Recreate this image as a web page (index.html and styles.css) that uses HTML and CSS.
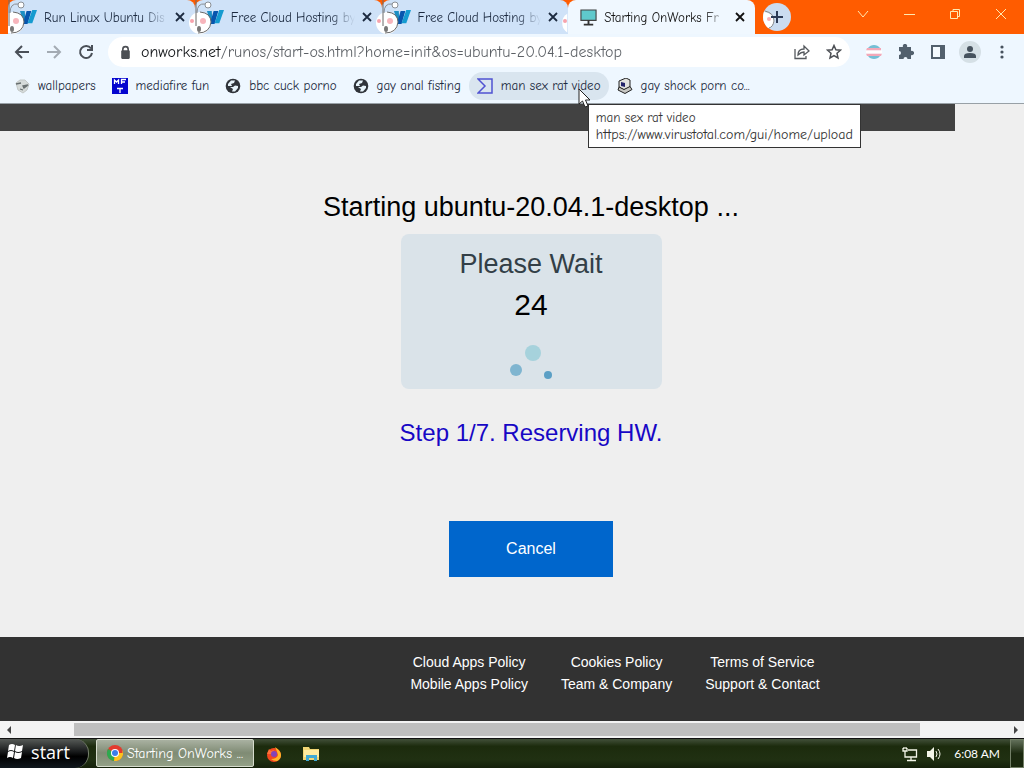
FILE: index.html
```html
<!DOCTYPE html>
<html lang="en">
<head>
<meta charset="utf-8">
<meta name="viewport" content="width=device-width, initial-scale=1">
<title>Starting OnWorks</title>
<link rel="stylesheet" href="styles.css">
</head>
<body>
<svg class="defs" aria-hidden="true">
  <symbol id="works" viewBox="0 0 18 16"><path d="M0 1h5l1 14H4z" fill="#1c8fc4"/><path d="M7 1h5l-4 14H3z" fill="#0756ae"/><path d="M13 0h5l-5 14H8z" fill="#159bd0"/></symbol>
  <symbol id="face" viewBox="0 0 26 34"><ellipse cx="11" cy="23" rx="11" ry="11" fill="#fff"/><path d="M8 13Q8 3 16 4" fill="none" stroke="#8a8f95"/><circle cx="19" cy="5" r="3" fill="#fff" stroke="#8a8f95"/><path d="M11 12Q22 13 22 22Q21 33 9 33M7 0v26" fill="none" stroke="#6a6a6a"/><circle cx="3" cy="21" r="2" fill="#f7a3ad"/><circle cx="14" cy="21" r="3" fill="#f7b5bc"/><ellipse cx="10" cy="29" rx="2" ry="3" fill="#777"/></symbol>
  <symbol id="cross" viewBox="0 0 10 10"><path d="M1 1l8 8M9 1L1 9" fill="none" stroke="currentColor" stroke-width="1.800"/></symbol>
  <symbol id="globe" viewBox="0 0 16 16"><circle cx="8" cy="8" r="7.300" fill="#30343a"/><path d="M3 6l3-3.500h4L9 5 6 6l1 2H3zM8 9l2-1.500 3 .5v2l-3 3.500H7l1-2.500-3-2z" fill="#e8f4fb"/></symbol>
</svg>

<header class="browser">
  <div class="tabstrip">
    <div class="tabs">
      <div class="tab"><svg class="fav"><use href="#works"/></svg><svg class="face"><use href="#face"/></svg><span class="tab-title">Run Linux Ubuntu Dis</span><button class="close" aria-label="Close tab"><svg><use href="#cross"/></svg></button></div>
      <div class="tab"><svg class="fav"><use href="#works"/></svg><svg class="face"><use href="#face"/></svg><span class="tab-title">Free Cloud Hosting by</span><button class="close" aria-label="Close tab"><svg><use href="#cross"/></svg></button></div>
      <div class="tab"><svg class="fav"><use href="#works"/></svg><svg class="face"><use href="#face"/></svg><span class="tab-title">Free Cloud Hosting by</span><button class="close" aria-label="Close tab"><svg><use href="#cross"/></svg></button></div>
      <div class="tab active"><svg class="fav" viewBox="0 0 18 18"><path d="M1 1h16v11H1z" fill="#5fc9cc" stroke="#444" stroke-width="1.200"/><path d="M9 12v4M4 16.500h10" stroke="#333" stroke-width="2"/></svg><svg class="face"><use href="#face"/></svg><span class="tab-title">Starting OnWorks Fr</span><button class="close" aria-label="Close tab"><svg><use href="#cross"/></svg></button></div>
    </div>
    <button class="newtab" aria-label="New tab"><svg viewBox="0 0 28 28"><circle cx="14" cy="14" r="14" fill="#cbdcf0"/><path d="M1 9Q10 10 11 18Q9 25 5 25Q-2 18 1 9z" fill="#fff"/><path d="M2 8Q11 10 11 18Q10 24 6 25" fill="none" stroke="#888"/><circle cx="6" cy="16" r="2" fill="#f7b0b8"/><path d="M14 8v12M8 14h12" stroke="#2c3a55" stroke-width="2"/></svg></button>
    <div class="window-buttons">
      <button aria-label="Search tabs"><svg viewBox="0 0 12 12"><path d="M1 3l5 6 5-6"/></svg></button>
      <button aria-label="Minimize"><svg viewBox="0 0 12 12"><path d="M1 6.500h11"/></svg></button>
      <button aria-label="Restore"><svg viewBox="0 0 12 12"><path d="M1.500 3.500h7v7h-7zM4 3.500v-2h6.500v7h-2"/></svg></button>
      <button aria-label="Close window"><svg viewBox="0 0 12 12"><path d="M1 1l10 10M11 1L1 11"/></svg></button>
    </div>
  </div>

  <div class="toolbar">
    <div class="nav">
      <button aria-label="Back"><svg viewBox="0 0 16 16"><path d="M15 8H2M8 2L2 8l6 6"/></svg></button>
      <button class="faint" aria-label="Forward"><svg viewBox="0 0 16 16"><path d="M1 8h13M8 2l6 6-6 6"/></svg></button>
      <button aria-label="Reload"><svg viewBox="0 0 16 16"><path d="M13 4.500A6 6 0 1 0 14 9M14 1v5H9"/></svg></button>
    </div>
    <div class="omnibox">
      <svg class="lock" viewBox="0 0 10 14"><path d="M2.500 6V4a2.500 2.500 0 0 1 5 0v2" fill="none" stroke="#4c4f54" stroke-width="1.500"/><rect x="1" y="5" width="8" height="8" rx="1" fill="#4c4f54"/></svg>
      <input class="url" type="text" aria-label="Address" value="onworks.net/runos/start-os.html?home=init&amp;os=ubuntu-20.04.1-desktop">
      <button aria-label="Share"><svg viewBox="0 0 16 16" fill="none" stroke="#55595e" stroke-width="1.300"><path d="M1 5v9.500h11V12M4 11c0-4 2-6 6-6V2l5 5-5 4V8c-3 0-4 1-6 3z"/></svg></button>
      <button aria-label="Bookmark"><svg viewBox="0 0 16 16" fill="none" stroke="#4c4f54" stroke-width="1.500"><path d="M8 1.500l1.900 4.300 4.600.4-3.500 3.100 1 4.600L8 11.500l-4 2.400 1-4.600-3.500-3.100 4.600-.4z"/></svg></button>
    </div>
    <div class="extensions">
      <button aria-label="Flag extension"><svg viewBox="0 0 16 16"><path d="M2 4a7.500 7.500 0 0 1 12 0z" fill="#75bfd5"/><path d="M1 4h14v2.500H0zM0 9.500h16L15 12H1z" fill="#f3a8b8"/><path d="M0 6.500h16v3H0z" fill="#fff"/><path d="M2 12a7.500 7.500 0 0 0 12 0z" fill="#75bfd5"/></svg></button>
      <button aria-label="Extensions"><svg viewBox="0 0 16 16" fill="#52606d"><path d="M1 3h4a2.200 2.200 0 1 1 4 0h4v4a2.200 2.200 0 1 1 0 4v4H9.500a2 2 0 1 0-4 0H1v-4a2 2 0 1 0 0-4z"/></svg></button>
      <button aria-label="Side panel"><svg viewBox="0 0 16 16"><path d="M2 2h12v12H2z" fill="#f5fbff" stroke="#52606d" stroke-width="2"/><path d="M10 2h4v12h-4z" fill="#52606d"/></svg></button>
      <button class="profile" aria-label="Profile"><svg viewBox="0 0 22 22"><circle cx="11" cy="11" r="11" fill="#d5e0e6"/><circle cx="11" cy="8" r="3" fill="#46525e"/><path d="M5 17v-2q0-3 6-3t6 3v2z" fill="#46525e"/></svg></button>
      <button aria-label="Menu"><svg viewBox="0 0 16 16" fill="#46525e"><circle cx="8" cy="3" r="1.600"/><circle cx="8" cy="8" r="1.600"/><circle cx="8" cy="13" r="1.600"/></svg></button>
    </div>
  </div>

  <nav class="bookmarks" aria-label="Bookmarks">
    <a href="#"><svg viewBox="0 0 16 16"><path d="M2 5l4-3 5 0 4 4-2 6-4 3-5-3z" fill="#d5dad9" stroke="#c3c8c7"/><path d="M2 6l5-1M9 8l5-1-4 3zM6 11l3 1" fill="none" stroke="#686f70" stroke-width="1.300"/></svg>wallpapers</a>
    <a href="#"><svg viewBox="0 0 16 16"><path d="M0 0h16v16H0z" fill="#0505cf"/><path d="M2.500 6V2l2 2 2-2v4M9.500 6V1.500H14M9.500 4H13M5 10.500h6M8 10v5" fill="none" stroke="#fff" stroke-width="1.300"/></svg>mediafire fun</a>
    <a href="#"><svg><use href="#globe"/></svg>bbc cuck porno</a>
    <a href="#"><svg><use href="#globe"/></svg>gay anal fisting</a>
    <a href="#" class="hover"><svg viewBox="0 0 16 16"><path d="M1 1h14v14H1l7-7z" fill="none" stroke="#5053d2" stroke-width="1.500"/></svg>man sex rat video
      <span class="tooltip" role="tooltip">man sex rat video<span class="tooltip-url">https://www.virustotal.com/gui/home/upload</span></span>
      <svg class="cursor" viewBox="0 0 13 20"><path d="M1 1v15l3.500-3 2.500 6 3-1-2.500-6H12z" fill="#fff" stroke="#222"/></svg>
    </a>
    <a href="#"><svg viewBox="0 0 16 16"><path d="M2 3l7-3 4 2v7l-6 3-5-3z" fill="#e2e2df" stroke="#222"/><path d="M4 4l4 1v4L4 8z" fill="#23236b"/><path d="M2 9l-1 3 7 3.500 7-4-2-3-6 3z" fill="#c6c6c2" stroke="#222"/></svg>gay shock porn co...</a>
  </nav>
</header>

<main class="page">
  <div class="topbar"></div>
  <section class="launch">
    <h1>Starting ubuntu-20.04.1-desktop ...</h1>
    <div class="wait">
      <p class="wait-title">Please Wait</p>
      <p class="count">24</p>
      <svg class="spinner" viewBox="0 0 44 36"><circle cx="24" cy="9" r="8" fill="#a6d2dc"/><circle cx="7" cy="26" r="6" fill="#7fb5d0"/><circle cx="39" cy="31" r="4" fill="#5b9fc5"/></svg>
    </div>
    <p class="step">Step 1/7. Reserving HW.</p>
    <button class="cancel">Cancel</button>
  </section>
  <footer class="footer">
    <div><a href="#">Cloud Apps Policy</a><a href="#">Mobile Apps Policy</a></div>
    <div><a href="#">Cookies Policy</a><a href="#">Team &amp; Company</a></div>
    <div><a href="#">Terms of Service</a><a href="#">Support &amp; Contact</a></div>
  </footer>
</main>

<div class="scrollbar">
  <button aria-label="Scroll left"><svg viewBox="0 0 6 8"><path d="M5 0v8L1 4z"/></svg></button>
  <div class="track"><div class="thumb"></div></div>
  <button aria-label="Scroll right"><svg viewBox="0 0 6 8"><path d="M1 0v8l4-4z"/></svg></button>
</div>

<div class="taskbar">
  <button class="start"><svg viewBox="0 0 18 18" fill="#fff"><path d="M3 2q3-2 6 0L8 8Q5 6 2 8zM10 2q3 2 7 0l-1 6q-4 2-7 0zM2 9q3-2 6 0l-1 6q-3-2-6 0zM9 9q3 2 7 0l-1 6q-4 2-7 0z"/></svg>start</button>
  <button class="task"><svg viewBox="0 0 16 16"><circle cx="8" cy="8" r="8" fill="#e33b2e"/><path d="M8 8L1 4a8 8 0 0 0 6 12z" fill="#2da94f"/><path d="M8 8h7.500v-3A8 8 0 0 1 7 16z" fill="#fcc31e"/><circle cx="8" cy="8" r="4" fill="#fff"/><circle cx="8" cy="8" r="3" fill="#3b7de9"/></svg><span>Starting OnWorks ...</span></button>
  <button class="launcher" aria-label="Firefox"><svg viewBox="0 0 16 16"><circle cx="8" cy="9" r="7" fill="#f4491f"/><path d="M1 8l2-5 2 2 3-1-2 4z" fill="#ff7139"/><path d="M9 1q6 4 6 8 0 4-4 6-4 0-6-2 6 0 7-4-1-4-3-8z" fill="#ffb528"/><circle cx="8" cy="8" r="3" fill="#8444b9"/></svg></button>
  <button class="launcher" aria-label="File Explorer"><svg viewBox="0 0 16 16"><path d="M0 1h6l1 2h9v11H0z" fill="#f2d675"/><path d="M1 4h15v7H1z" fill="#ffeba0"/><path d="M3 9h11v6h-3v-3H6v3H3z" fill="#40a9d4"/></svg></button>
  <div class="tray">
    <svg viewBox="0 0 16 16" fill="none" stroke="#f3f5e8" stroke-width="1.300"><path d="M6 4h8.500v7H5M9 11v3M5 14.500h9M1 2v3h4V2M3 5v6h3M2 1v2M4 1v2"/></svg>
    <svg viewBox="0 0 16 16"><path d="M1 5h3l4-4v14l-4-4H1z" fill="#f3f5e8"/><path d="M10 5q2 3 0 6M12 3q4 5 0 10" fill="none" stroke="#f3f5e8"/></svg>
    <time>6:08 AM</time>
    <button class="desktop" aria-label="Show desktop"></button>
  </div>
</div>
</body>
</html>
```
FILE: styles.css
```css
* { box-sizing: border-box; }
body {
  margin: 0;
  min-height: 100vh;
  display: flex;
  flex-direction: column;
  background: #efefef;
  font-family: "Liberation Sans", Arial, sans-serif;
  overflow-x: hidden;
}
h1, p { margin: 0; font-weight: 400; }
a { color: inherit; text-decoration: none; }
button { border: 0; padding: 0; background: none; font: inherit; color: inherit; display: flex; align-items: center; justify-content: center; }
svg { display: block; flex: none; width: 16px; height: 16px; }
.defs { position: absolute; width: 0; height: 0; }

.browser {
  font-family: "Comic Sans MS", "Comic Neue", "Noto Sans", sans-serif;
  font-size: 13px;
  color: #1c2a40;
  background: #eef7ff;
  border-bottom: 1px solid #98a0a6;
}
.tabstrip { display: flex; align-items: stretch; height: 34px; padding-left: 8px; background: #ff5c00; }
.tabs { display: flex; flex: 0 1 747px; min-width: 0; }
.tab {
  position: relative;
  flex: 1 1 0;
  min-width: 0;
  display: flex;
  align-items: center;
  gap: 7px;
  padding: 0 10px 0 12px;
  background: #cfe2f8;
  border-radius: 8px 8px 0 0;
}
.tab.active { background: #f0f8ff; color: #111; }
.tab .face { position: absolute; left: -6px; top: 0; width: 26px; height: 34px; }
.tab:first-child .face { clip-path: inset(0 0 0 6px); }
.tab.active .face { clip-path: inset(0 21px 0 0); }
.tab .fav { width: 17px; height: 17px; }
.tab-title {
  flex: 1;
  min-width: 0;
  overflow: hidden;
  white-space: nowrap;
  -webkit-mask-image: linear-gradient(to right, #000 80%, transparent);
  mask-image: linear-gradient(to right, #000 80%, transparent);
}
.close svg { width: 10px; height: 10px; }
.newtab { margin-left: 8px; }
.newtab svg { width: 28px; height: 28px; }
.window-buttons { display: flex; margin-left: auto; padding-bottom: 6px; }
.window-buttons button { width: 46px; }
.window-buttons svg { width: 12px; height: 12px; fill: none; stroke: #ffe9b0; stroke-width: 1; }

.toolbar { display: flex; align-items: center; height: 36px; }
.nav { display: flex; gap: 16px; padding: 0 14px; }
.nav svg { fill: none; stroke: #4a5058; stroke-width: 2; }
.nav .faint { opacity: .45; }
.omnibox { flex: 1; min-width: 0; display: flex; align-items: center; gap: 16px; height: 30px; padding: 0 8px 0 12px; background: #fff; border-radius: 15px; }
.lock { width: 11px; height: 15px; }
.url {
  flex: 1;
  min-width: 0;
  border: 0;
  padding: 0;
  margin-left: -6px;
  font: inherit;
  font-size: 16px;
  color: transparent;
  background: linear-gradient(to right, #111417 80px, #5c6065 80px);
  -webkit-background-clip: text;
  background-clip: text;
}
.extensions { display: flex; align-items: center; gap: 16px; padding: 0 14px 0 16px; }
.profile { margin: 0 -3px; }
.profile svg { width: 22px; height: 22px; }

.bookmarks { display: flex; align-items: center; height: 33px; padding: 0 6px 2px; white-space: nowrap; }
.bookmarks a { position: relative; display: flex; align-items: center; gap: 8px; height: 28px; padding: 0 8px; border-radius: 14px; }
.bookmarks .hover { background: #d9e5ef; }
.bookmarks .cursor { position: absolute; left: 109px; top: 16px; width: 13px; height: 20px; z-index: 3; }
.tooltip {
  position: absolute;
  left: 119px;
  top: 32px;
  z-index: 2;
  padding: 4px 7px;
  line-height: 17px;
  color: #333;
  background: #fff;
  border: 1px solid #333;
}
.tooltip-url { display: block; font-size: 14px; }

.page { flex: 1; display: flex; flex-direction: column; }
.topbar { height: 27px; margin-right: 69px; background: #424242; }
.launch { flex: 1; display: flex; flex-direction: column; align-items: center; padding: 60px 0 60px 38px; }
.launch h1 { font-size: 27px; line-height: 32px; color: #000; }
.wait { width: 261px; height: 155px; margin-top: 11px; padding-top: 14px; border-radius: 8px; background: #dae3e9; text-align: center; }
.wait-title { font-size: 27px; line-height: 32px; color: #333f47; }
.count { margin-top: 8px; font-size: 30px; line-height: 34px; color: #000; }
.spinner { width: 44px; height: 36px; margin: 22px auto 0; }
.step { margin-top: 30px; font-size: 24px; line-height: 28px; color: #1707c5; }
.cancel { width: 164px; height: 56px; margin-top: 74px; background: #0066cc; color: #fff; font-size: 16px; }
.footer { display: flex; justify-content: center; gap: 33px; padding: 14px 0 26px 206px; background: #323232; color: #fff; font-size: 14px; line-height: 22px; text-align: center; }
.footer a { display: block; }

.scrollbar { display: flex; height: 17px; background: #f3f3f3; }
.scrollbar button { width: 17px; }
.scrollbar svg { width: 6px; height: 8px; fill: #444; }
.track { flex: 1; padding: 2px 0; }
.thumb { width: 85.4%; height: 13px; margin-left: 5.8%; background: #bfbfbf; }

.taskbar {
  display: flex;
  align-items: stretch;
  height: 30px;
  border-top: 1px solid #111;
  background: linear-gradient(to bottom, #42503a, #1c2b0d 25%, #203012 70%, #14200a);
  color: #fff;
}
.start { width: 89px; gap: 7px; padding: 0 12px 3px 0; border-radius: 0 14px 14px 0; border-right: 1px solid #77806e; background: linear-gradient(#565a57, #161819 45%, #000 60%, #10171d); font-family: "Open Sans", sans-serif; font-size: 18px; }
.start svg { width: 18px; height: 18px; }
.task { width: 158px; margin: 0 0 1px 7px; gap: 4px; border: 1px solid #d6dccd; border-radius: 2px; background: linear-gradient(#a9b1a1, #7f8b74 50%, #93a086); font-family: "Comic Sans MS", "Comic Neue", "Noto Sans", sans-serif; font-size: 14px; white-space: nowrap; }
.launcher { margin-left: 12px; }
.launcher + .launcher { margin-left: 21px; }
.tray { display: flex; align-items: center; gap: 8px; margin-left: auto; }
.tray time { font-family: Lato, sans-serif; font-size: 12px; margin: 0 2px 0 4px; }
.desktop { align-self: stretch; width: 14px; border: 1px solid #738067; background: linear-gradient(#62705a, #1b290f 50%); }
```
